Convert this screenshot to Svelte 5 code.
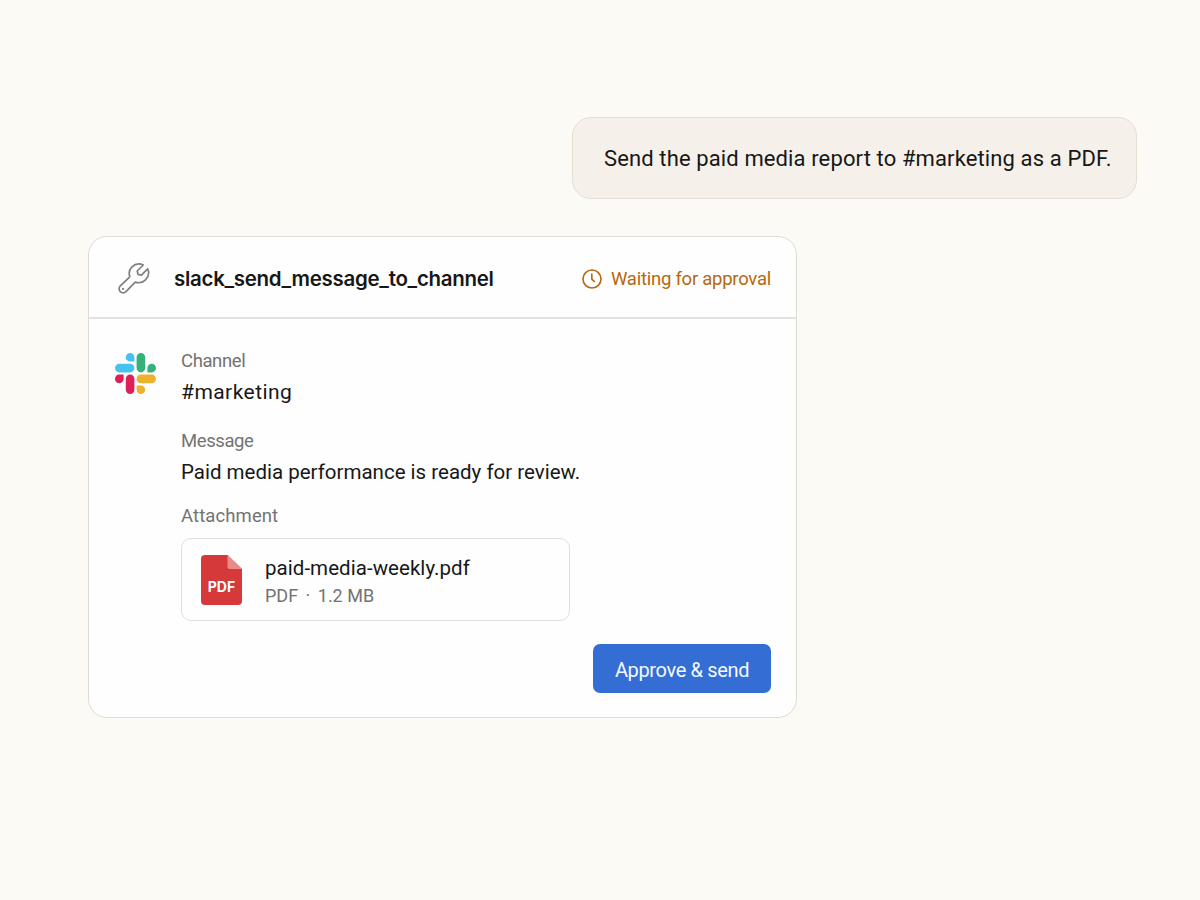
<script lang="ts">
  const prompt = "Send the paid media report to #marketing as a PDF."

  const call = {
    tool: "slack_send_message_to_channel",
    status: "Waiting for approval",
    channel: "#marketing",
    message: "Paid media performance is ready for review.",
    file: { name: "paid-media-weekly.pdf", type: "PDF", size: "1.2 MB" },
  }
</script>

<main>
  <div class="bubble"><span>{prompt}</span></div>

  <section class="card">
    <header>
      <svg class="wrench" width="32" height="32" viewBox="0 0 32 32" fill="none">
        <path
          d="M25.3 2C21.4.2 16.9 1 14 3.9c-2.7 2.7-3.4 6.4-2.2 9.9L2.3 22.9a4 4 0 0 0 0 5.7 4 4 0 0 0 5.7 0l9.2-9.5c3.6 1.2 7.6.5 10.3-2.3 2.9-2.9 3.8-7.4 2.2-11l-6.3 6.3-3.4-.8-.8-3.3z"
          stroke="#808080"
          stroke-width="1.7"
          stroke-linejoin="round"
        />
        <circle cx="5.1" cy="25.9" r="1.1" fill="#808080" />
      </svg>
      <h1>{call.tool}</h1>
      <div class="status">
        <svg width="20" height="20" viewBox="0 0 20 20" fill="none" stroke="#b5680f" stroke-width="1.6" stroke-linecap="round" stroke-linejoin="round">
          <circle cx="10" cy="10" r="9" />
          <path d="M9.8 5v5.2l2.4 2.2" />
        </svg>
        <span>{call.status}</span>
      </div>
    </header>

    <div class="body">
      <svg class="slack" width="41" height="41" viewBox="0 0 122.8 122.8">
        <path fill="#e01e5a" d="M25.8 77.6c0 7.1-5.8 12.9-12.9 12.9S0 84.7 0 77.6s5.8-12.9 12.9-12.9h12.9v12.9zm6.5 0c0-7.1 5.8-12.9 12.9-12.9s12.9 5.8 12.9 12.9v32.3c0 7.1-5.8 12.9-12.9 12.9s-12.9-5.8-12.9-12.9V77.6z" />
        <path fill="#45c2ee" d="M45.2 25.8c-7.1 0-12.9-5.8-12.9-12.9S38.1 0 45.2 0s12.9 5.8 12.9 12.9v12.9H45.2zm0 6.5c7.1 0 12.9 5.8 12.9 12.9s-5.8 12.9-12.9 12.9H12.9C5.8 58.1 0 52.3 0 45.2s5.8-12.9 12.9-12.9h32.3z" />
        <path fill="#34b277" d="M97 45.2c0-7.1 5.8-12.9 12.9-12.9s12.9 5.8 12.9 12.9-5.8 12.9-12.9 12.9H97V45.2zm-6.5 0c0 7.1-5.8 12.9-12.9 12.9s-12.9-5.8-12.9-12.9V12.9C64.7 5.8 70.5 0 77.6 0s12.9 5.8 12.9 12.9v32.3z" />
        <path fill="#ecb22e" d="M77.6 97c7.1 0 12.9 5.8 12.9 12.9s-5.8 12.9-12.9 12.9-12.9-5.8-12.9-12.9V97h12.9zm0-6.5c-7.1 0-12.9-5.8-12.9-12.9s5.8-12.9 12.9-12.9h32.3c7.1 0 12.9 5.8 12.9 12.9s-5.8 12.9-12.9 12.9H77.6z" />
      </svg>

      <dl>
        <dt>Channel</dt>
        <dd class="channel">{call.channel}</dd>
        <dt>Message</dt>
        <dd class="message">{call.message}</dd>
        <dt class="attachment">Attachment</dt>
        <dd class="file">
          <svg width="41" height="50" viewBox="0 0 41 50">
            <path fill="#d5393a" d="M4 0h22.5L41 14v32a4 4 0 0 1-4 4H4a4 4 0 0 1-4-4V4a4 4 0 0 1 4-4z" />
            <path fill="#e98b8a" d="M26.5 0 41 14H29a2.5 2.5 0 0 1-2.5-2.5z" />
            <text x="20.5" y="37" text-anchor="middle">PDF</text>
          </svg>
          <div class="info">
            <div class="name">{call.file.name}</div>
            <div class="meta">{call.file.type} <i>·</i> {call.file.size}</div>
          </div>
        </dd>
      </dl>
    </div>

    <footer>
      <button><span>Approve &amp; send</span></button>
    </footer>
  </section>
</main>

<style>
  :global(body) {
    background: #fcfaf5;
  }

  main {
    box-sizing: border-box;
    height: 900px;
    padding: 117px 63px 0 88px;
    display: flex;
    flex-direction: column;
    font-family: Roboto, "Liberation Sans", sans-serif;
    color: #171717;
    white-space: nowrap;
  }

  .bubble {
    box-sizing: border-box;
    align-self: flex-end;
    width: 565px;
    height: 82px;
    padding: 0 0 0 31px;
    display: flex;
    align-items: center;
    background: #f5f0e9;
    border: 1px solid #e3dfd3;
    border-radius: 19px;
    font-size: 22px;
    letter-spacing: 0.12px;
  }

  .card {
    box-sizing: border-box;
    width: 709px;
    height: 482px;
    margin-top: 37px;
    display: flex;
    flex-direction: column;
    background: #fefefe;
    border: 1px solid #dddcd6;
    border-radius: 19px;
  }

  header {
    box-sizing: border-box;
    height: 82px;
    padding: 2px 25px 0 29px;
    display: flex;
    align-items: center;
    border-bottom: 2px solid #e2e2de;
  }

  .wrench {
    margin-top: 1px;
  }

  h1 {
    margin: 0 auto 0 24px;
    padding-top: 2px;
    font-family: Inter, "Liberation Sans", sans-serif;
    font-size: 20.5px;
    font-weight: 600;
    line-height: 28px;
    letter-spacing: -0.3px;
  }

  .status {
    display: flex;
    align-items: center;
    gap: 9px;
    padding-top: 1px;
    color: #b5680f;
    font-size: 18.5px;
    letter-spacing: -0.25px;
  }

  .body {
    flex: 1;
    padding: 30px 26px 0;
    display: flex;
    gap: 25px;
  }

  .slack {
    flex: none;
    margin-top: 4px;
  }

  dl {
    margin: 0;
  }

  dt {
    color: #737373;
    font-size: 18.5px;
    line-height: 24px;
    letter-spacing: -0.4px;
  }

  dd {
    margin: 0;
    font-size: 20.5px;
    line-height: 28px;
  }

  .channel {
    margin: 5px 0 23px;
    font-size: 21px;
    letter-spacing: 0.45px;
  }

  .message {
    margin: 5px 0 18px;
  }

  .attachment {
    letter-spacing: 0.1px;
  }

  .file {
    box-sizing: border-box;
    width: 389px;
    height: 83px;
    margin-top: 10px;
    padding-left: 19px;
    display: flex;
    align-items: center;
    gap: 23px;
    border: 1.5px solid #dfdfdb;
    border-radius: 10px;
  }

  .file text {
    fill: #fff;
    font-family: Inter, "Liberation Sans", sans-serif;
    font-size: 14px;
    font-weight: 700;
  }

  .info {
    padding-top: 5px;
  }

  .name {
    letter-spacing: 0.05px;
  }

  .meta {
    color: #737373;
    font-size: 18px;
  }

  .meta i {
    margin: 0 3px;
    font-style: normal;
  }

  footer {
    padding: 0 25px 24px;
    display: flex;
    justify-content: flex-end;
  }

  button {
    width: 178px;
    height: 49px;
    padding: 2px 0 0;
    background: #346dd3;
    border: none;
    border-radius: 7px;
    color: #f5f9ff;
    font: inherit;
    font-size: 20px;
    letter-spacing: -0.35px;
  }
</style>
